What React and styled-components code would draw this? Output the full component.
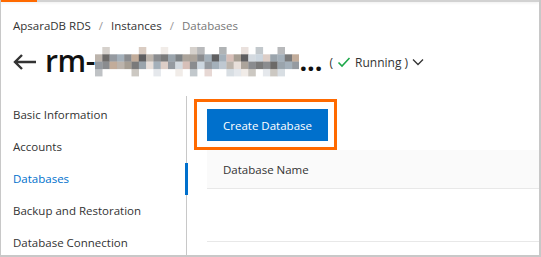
import React from 'react';
import styled, { createGlobalStyle } from 'styled-components';

const GlobalStyle = createGlobalStyle`
  html, body {
    margin: 0;
    padding: 0;
    background: #fff;
  }
  body {
    font-family: "Open Sans", "Noto Sans", sans-serif;
    color: #333;
  }
  * {
    box-sizing: border-box;
  }
`;

const Frame = styled.div`
  width: 541px;
  height: 257px;
  border-left: 1px solid #c8c8c8;
  border-right: 2px solid #c8c8c8;
  border-bottom: 2px solid #c8c8c8;
  display: flex;
  flex-direction: column;
  overflow: hidden;
`;

const TopBar = styled.div`
  height: 2px;
  flex-shrink: 0;
  background: #d2d2d2;
  display: flex;
  box-shadow: 0 1px 3px rgba(0, 0, 0, 0.08);
`;

const Progress = styled.div`
  width: 36px;
  background: #ff6a00;
`;

const Header = styled.div`
  padding: 15px 0 0 12px;
  height: 94px;
  flex-shrink: 0;
`;

const Breadcrumb = styled.div`
  display: flex;
  align-items: center;
  gap: 8px;
  font-size: 11.5px;
  line-height: 18px;
`;

const Crumb = styled.span`
  color: ${p => (p.$current ? '#777' : '#333')};
`;

const Sep = styled.span`
  color: #999;
`;

const TitleRow = styled.div`
  display: flex;
  align-items: center;
  margin-top: 6px;
  height: 38px;
`;

const Back = styled.svg`
  width: 24px;
  height: 16px;
  margin-right: 8px;
  margin-top: 4px;
`;

const Title = styled.span`
  font-size: 30px;
  font-weight: 600;
  color: #111;
  letter-spacing: -0.4px;
  display: flex;
  align-items: center;
`;

const Dots = styled.span`
  font-size: 27px;
  font-weight: 700;
  color: #111;
`;

const Status = styled.span`
  display: flex;
  align-items: center;
  font-size: 12px;
  color: #333;
  margin-left: 7px;
  margin-top: 4px;
  gap: 4px;
`;

const Body = styled.div`
  flex: 1;
  min-height: 0;
  display: flex;
  overflow: hidden;
`;

const Sidebar = styled.nav`
  width: 186px;
  border-right: 1px solid #c8c8c8;
  padding-top: 3px;
  flex-shrink: 0;
`;

const NavItem = styled.div`
  position: relative;
  height: 32px;
  line-height: 32px;
  padding-left: 12px;
  font-size: 11.5px;
  color: ${p => (p.$active ? '#0070cc' : '#333')};

  &::after {
    content: '';
    display: ${p => (p.$active ? 'block' : 'none')};
    position: absolute;
    right: -2px;
    top: 0;
    width: 3px;
    height: 32px;
    background: #0070cc;
  }
`;

const Content = styled.div`
  flex: 1;
  padding: 13px 0 0 20px;
`;

const Toolbar = styled.div`
  display: flex;
  height: 32px;
  margin-bottom: 9px;
`;

const Highlight = styled.div`
  position: relative;

  &::after {
    content: '';
    position: absolute;
    left: -13px;
    right: -9px;
    top: -10px;
    bottom: -9px;
    border: 3px solid #ff6a00;
    pointer-events: none;
  }
`;

const PrimaryButton = styled.button`
  width: 121px;
  height: 32px;
  border: none;
  background: #0070cc;
  color: #fff;
  font-family: inherit;
  font-size: 11.5px;
  padding: 0;
  cursor: pointer;
`;

const TableHead = styled.div`
  height: 39px;
  background: #fafafa;
  border-bottom: 1px solid #e8e8e8;
  display: flex;
  align-items: center;
  padding-left: 16px;
  font-size: 11.5px;
  color: #333;
`;

const TableRow = styled.div`
  height: 53px;
  border-bottom: 1px solid #e8e8e8;
`;

const mosaicColors = [
  '#6b6b6b', '#8a8f96', '#b5aca3', '#d9c9c1', '#9aa7b3', '#c7d2dc',
  '#5c5a58', '#a39a90', '#7d7f83', '#cfd6dd', '#bba38f', '#e6dcd6',
  '#8f9aa3', '#4e4e50', '#b8c2cc', '#d3b8b0', '#9c9387', '#6f7478',
];

const Mosaic = () => {
  const cols = 28;
  const rows = 4;
  const size = 7.3;
  const cells = [];
  let seed = 7;
  const rand = () => {
    seed = (seed * 9301 + 49297) % 233280;
    return seed / 233280;
  };
  for (let r = 0; r < rows; r++) {
    for (let c = 0; c < cols; c++) {
      const v = rand();
      const edge = r === 0 || r === 3;
      if (edge && v < 0.55) continue;
      const col = mosaicColors[Math.floor(rand() * mosaicColors.length)];
      cells.push(
        <rect
          key={`${r}-${c}`}
          x={c * size}
          y={r * size}
          width={size + 0.2}
          height={size + 0.2}
          fill={col}
          opacity={edge ? 0.55 : 0.9}
        />
      );
    }
  }
  return (
    <svg width={cols * size} height={rows * size} style={{ marginTop: 4 }}>
      {cells}
    </svg>
  );
};

const navItems = [
  'Basic Information',
  'Accounts',
  'Databases',
  'Backup and Restoration',
  'Database Connection',
];

export default function App() {
  return (
    <>
      <GlobalStyle />
      <Frame>
        <TopBar>
          <Progress />
        </TopBar>
        <Header>
          <Breadcrumb>
            <Crumb>ApsaraDB RDS</Crumb>
            <Sep>/</Sep>
            <Crumb>Instances</Crumb>
            <Sep>/</Sep>
            <Crumb $current>Databases</Crumb>
          </Breadcrumb>
          <TitleRow>
            <Back viewBox="0 0 24 16">
              <path
                d="M23 8H2M9 1L2 8l7 7"
                fill="none"
                stroke="#333"
                strokeWidth="2.4"
              />
            </Back>
            <Title>
              rm-
              <Mosaic />
            </Title>
            <Dots>...</Dots>
            <Status>
              (
              <svg width="14" height="12" viewBox="0 0 14 12">
                <path d="M1.5 6.5l3.5 3.5L12.5 2" fill="none" stroke="#1ea84a" strokeWidth="1.6" />
              </svg>
              Running )
              <svg width="12" height="8" viewBox="0 0 12 8">
                <path d="M1 1.5l5 5 5-5" fill="none" stroke="#333" strokeWidth="1.3" />
              </svg>
            </Status>
          </TitleRow>
        </Header>
        <Body>
          <Sidebar>
            {navItems.map(item => (
              <NavItem key={item} $active={item === 'Databases'}>
                {item}
              </NavItem>
            ))}
          </Sidebar>
          <Content>
            <Toolbar>
              <Highlight>
                <PrimaryButton>Create Database</PrimaryButton>
              </Highlight>
            </Toolbar>
            <TableHead>Database Name</TableHead>
            <TableRow />
          </Content>
        </Body>
      </Frame>
    </>
  );
}
